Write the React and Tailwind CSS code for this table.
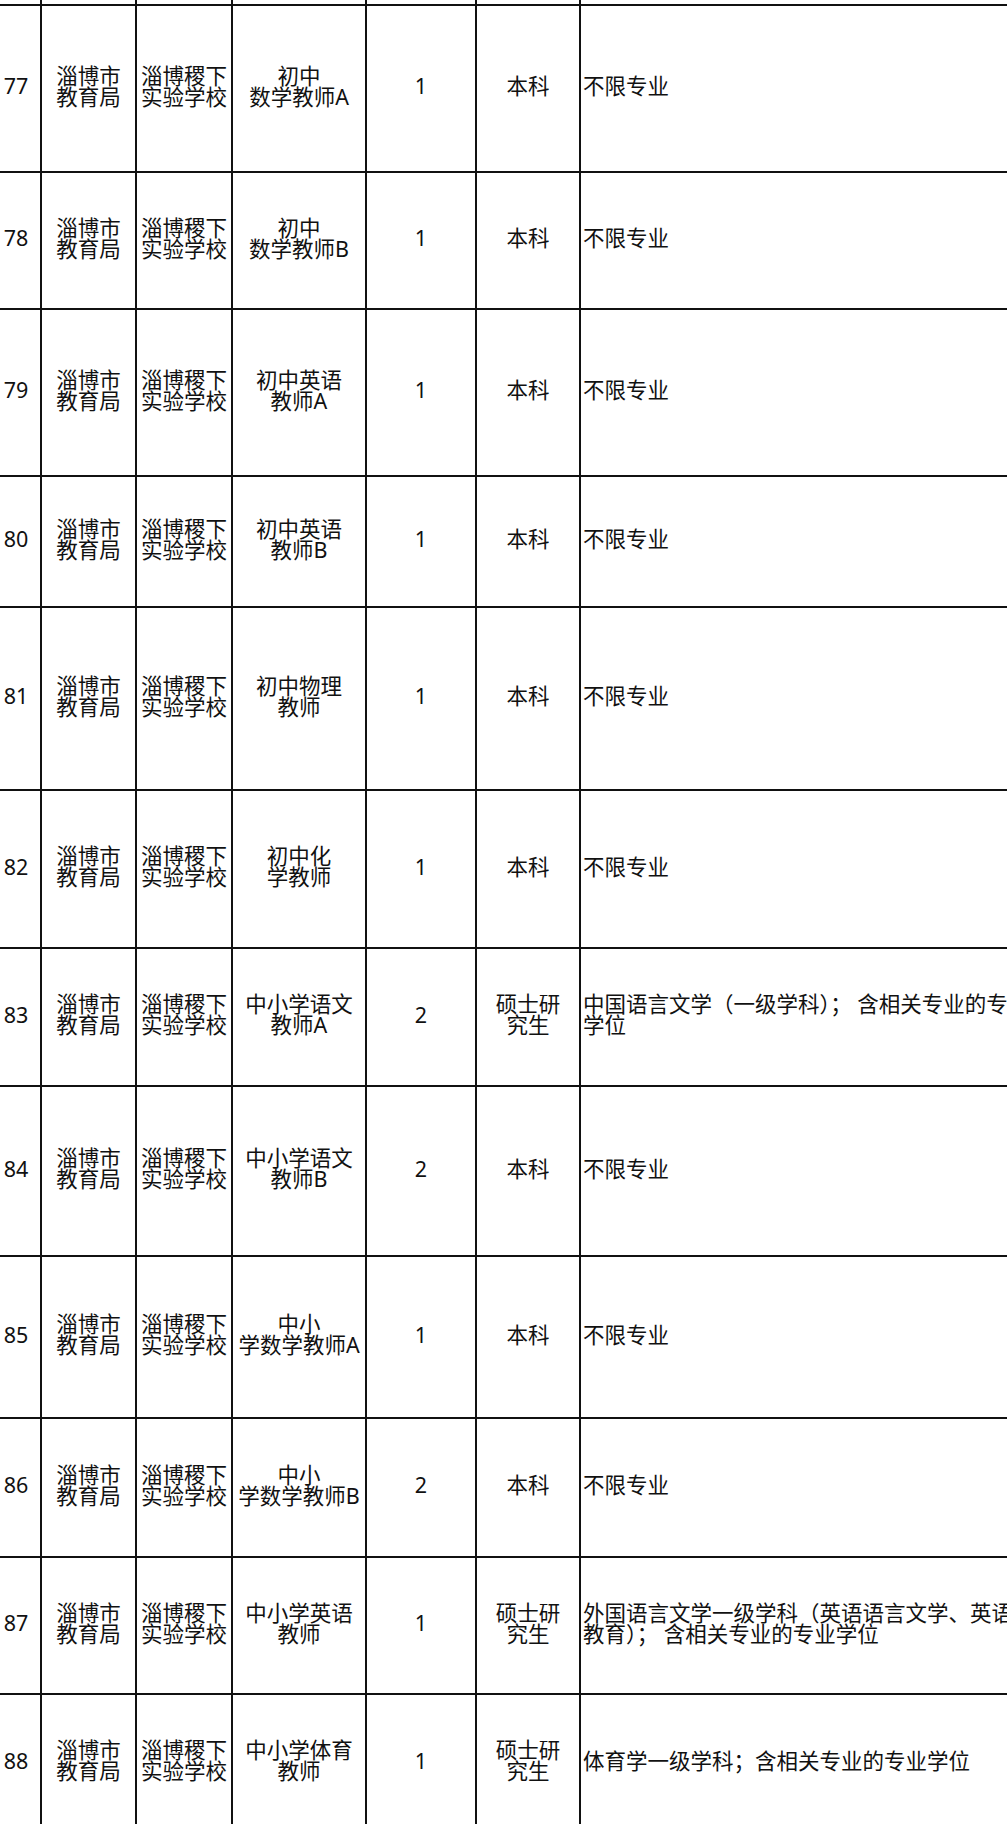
import React from "react";

const rows = [
  { no: "77", pos: ["初中", "数学教师A"], n: "1", edu: ["本科"], major: ["不限专业"], h: "h-[167px]" },
  { no: "78", pos: ["初中", "数学教师B"], n: "1", edu: ["本科"], major: ["不限专业"], h: "h-[137px]" },
  { no: "79", pos: ["初中英语", "教师A"], n: "1", edu: ["本科"], major: ["不限专业"], h: "h-[167px]" },
  { no: "80", pos: ["初中英语", "教师B"], n: "1", edu: ["本科"], major: ["不限专业"], h: "h-[131px]" },
  { no: "81", pos: ["初中物理", "教师"], n: "1", edu: ["本科"], major: ["不限专业"], h: "h-[183px]" },
  { no: "82", pos: ["初中化", "学教师"], n: "1", edu: ["本科"], major: ["不限专业"], h: "h-[158px]" },
  {
    no: "83",
    pos: ["中小学语文", "教师A"],
    n: "2",
    edu: ["硕士研", "究生"],
    major: ["中国语言文学（一级学科）； 含相关专业的专业", "学位"],
    h: "h-[138px]",
  },
  { no: "84", pos: ["中小学语文", "教师B"], n: "2", edu: ["本科"], major: ["不限专业"], h: "h-[170px]" },
  { no: "85", pos: ["中小", "学数学教师A"], n: "1", edu: ["本科"], major: ["不限专业"], h: "h-[162px]" },
  { no: "86", pos: ["中小", "学数学教师B"], n: "2", edu: ["本科"], major: ["不限专业"], h: "h-[139px]" },
  {
    no: "87",
    pos: ["中小学英语", "教师"],
    n: "1",
    edu: ["硕士研", "究生"],
    major: ["外国语言文学一级学科（英语语言文学、英语", "教育）； 含相关专业的专业学位"],
    h: "h-[137px]",
  },
  {
    no: "88",
    pos: ["中小学体育", "教师"],
    n: "1",
    edu: ["硕士研", "究生"],
    major: ["体育学一级学科；含相关专业的专业学位"],
    h: "h-[138px]",
  },
];

const cell = "flex items-center justify-center text-center border-r-2 border-[#111] shrink-0 pb-[6px]";

function Lines({ items }) {
  return (
    <div>
      {items.map((t) => (
        <div key={t} className="whitespace-pre">
          {t}
        </div>
      ))}
    </div>
  );
}

function Row({ r }) {
  return (
    <div className={`flex border-b-2 border-[#111] ${r.h}`}>
      <div className={`${cell} w-[42px] pr-[8px]`}>{r.no}</div>
      <div className={`${cell} w-[95px]`}>
        <Lines items={["淄博市", "教育局"]} />
      </div>
      <div className={`${cell} w-[96px]`}>
        <Lines items={["淄博稷下", "实验学校"]} />
      </div>
      <div className={`${cell} w-[134px]`}>
        <Lines items={r.pos} />
      </div>
      <div className={`${cell} w-[110px]`}>{r.n}</div>
      <div className={`${cell} w-[104px]`}>
        <Lines items={r.edu} />
      </div>
      <div className="flex items-center w-[480px] shrink-0 pl-[2px] pb-[6px]">
        <Lines items={r.major} />
      </div>
    </div>
  );
}

export default function App() {
  return (
    <div className="w-full h-[1824px] overflow-hidden bg-white text-[#111] font-['Noto_Sans','Noto_Sans_CJK_SC',sans-serif] text-[21.5px] leading-[21px]">
      <div className="w-[1061px]">
        {/* partial row above */}
        <div className="flex h-[6px] border-b-2 border-[#111]">
          <div className="w-[42px] border-r-2 border-[#111]" />
          <div className="w-[95px] border-r-2 border-[#111]" />
          <div className="w-[96px] border-r-2 border-[#111]" />
          <div className="w-[134px] border-r-2 border-[#111]" />
          <div className="w-[110px] border-r-2 border-[#111]" />
          <div className="w-[104px] border-r-2 border-[#111]" />
        </div>
        {rows.map((r) => (
          <Row key={r.no} r={r} />
        ))}
      </div>
    </div>
  );
}
